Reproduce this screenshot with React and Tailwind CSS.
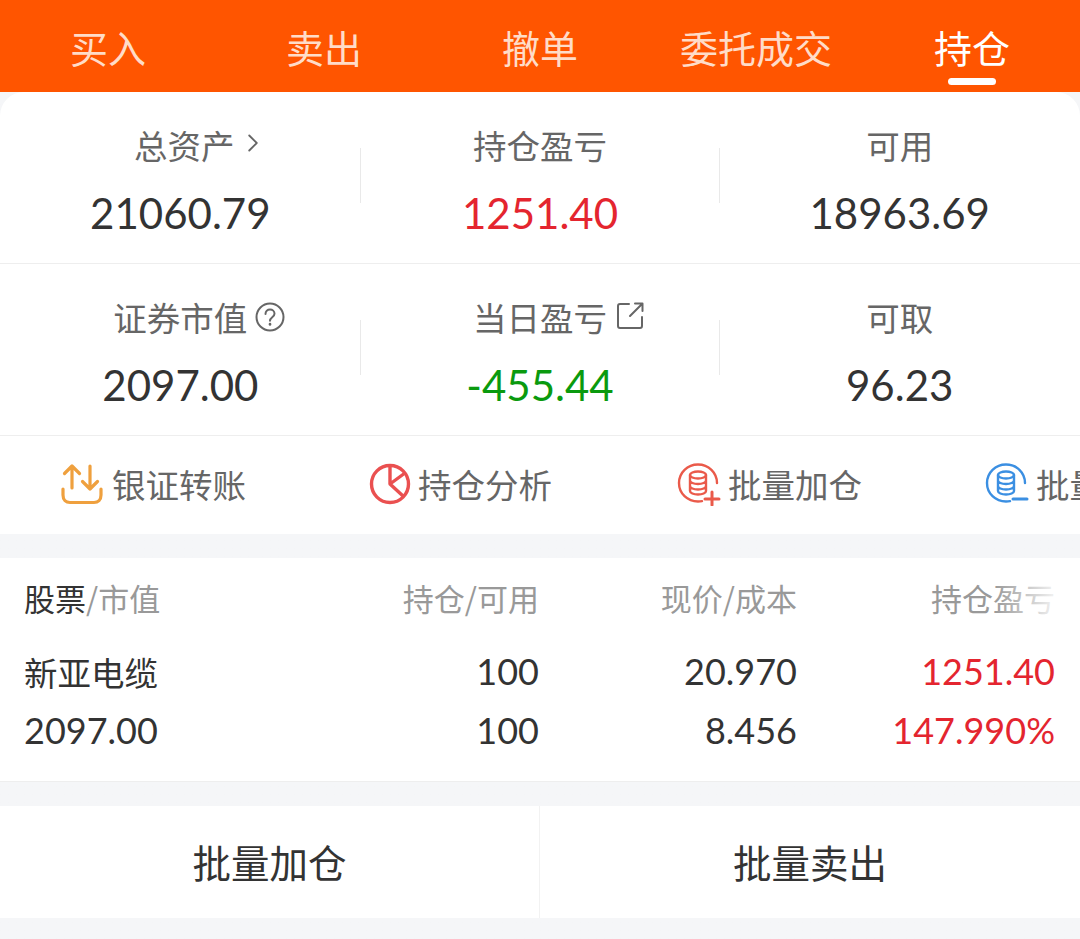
import { ChevronRight } from "lucide-react";

const CJK = "font-['Noto_Sans_CJK_SC','Noto_Sans',sans-serif]";
const NUM = "font-['Lato','Noto_Sans_CJK_SC',sans-serif]";

const TABS = ["买入", "卖出", "撤单", "委托成交", "持仓"];

function TransferIcon() {
  return (
    <svg width="44" height="44" viewBox="0 0 44 44" fill="none" stroke="#efa03e" strokeWidth="3.2" strokeLinecap="round" strokeLinejoin="round">
      <path d="M11 26V4M3.500 11.500 11 4l7.500 7.500" />
      <path d="M29 4v23M21.500 19.500 29 27l7.500-7.500" />
      <path d="M2 27v6c0 5 3 7.500 7 7.500h24c4 0 7-2.500 7-7.500v-6" />
    </svg>
  );
}

function PieIcon() {
  return (
    <svg width="42" height="42" viewBox="0 0 42 42" fill="none" stroke="#ea5050" strokeWidth="3.400" strokeLinejoin="round">
      <circle cx="21" cy="21" r="18.500" />
      <path d="M21 3v18l15-11M21 21l13 12" />
    </svg>
  );
}

function DbIcon({ color, plus }) {
  return (
    <svg width="44" height="44" viewBox="0 0 44 44" fill="none" stroke={color} strokeWidth="2.400" strokeLinecap="round">
      <path d="M40 21C40 10.500 31.500 2.500 21 2.500S2 10.500 2 21s8.500 18.500 19 18.500c1.500 0 3-.2 4-.4" />
      <ellipse cx="21" cy="13" rx="8" ry="3.500" />
      <path d="M13 13v16c0 2 3.600 3.500 8 3.500s8-1.500 8-3.500V13M13 18.500c0 2 3.600 3.500 8 3.500s8-1.500 8-3.500M13 24c0 2 3.600 3.500 8 3.500s8-1.500 8-3.500" />
      <path d="M28 37h14" strokeWidth="3" />
      {plus && <path d="M35 30v13" strokeWidth="3" />}
    </svg>
  );
}

function Stat({ label, value, color, after, shift }) {
  return (
    <div className="flex-1 flex flex-col items-center">
      <div className={`relative h-[46px] leading-[46px] text-[33.500px] text-[#666666] ${CJK} ${shift || ""}`}>
        {label}
        {after}
      </div>
      <div className={`mt-[20px] h-[50px] leading-[50px] text-[42px] ${NUM} ${color}`}>{value}</div>
    </div>
  );
}

function Divider() {
  return <div className="w-px h-[55px] mt-[26px] bg-[#e9e9e9] -mx-px shrink-0" />;
}

function StatRow({ children }) {
  return <div className="flex pt-[30px] h-[172px] border-b border-[#eeeeee]">{children}</div>;
}

function Shortcut({ icon, label }) {
  return (
    <div className="w-[308px] shrink-0 flex items-center gap-[7px]">
      {icon}
      <span className={`text-[33.500px] text-[#666666] ${CJK}`}>{label}</span>
    </div>
  );
}

export default function App() {
  return (
    <div className="w-[1080px] h-[939px] overflow-hidden bg-[#f5f6f8] bg-gradient-to-b from-[#ff5500] from-[92px] to-[#f5f6f8] to-[92px]">
      <div className="h-[92px] grid grid-cols-5">
        {TABS.map((t, i) => (
          <div key={t} className="relative flex justify-center pt-[20px]">
            <span className={`text-[38px] leading-[54px] ${CJK} ${i === 4 ? "text-white" : "text-[#ffdcc8]"}`}>{t}</span>
            {i === 4 && <div className="absolute left-[84px] top-[78px] w-[48px] h-[7px] rounded-full bg-white" />}
          </div>
        ))}
      </div>

      <div className="bg-white rounded-t-[24px]">
        <StatRow>
          <Stat
            label="总资产"
            value="21060.79"
            color="text-[#333333]"
            shift="left-[4px]"
            after={<ChevronRight className="absolute left-full top-[6px] ml-[3px]" size={30} strokeWidth={1.500} color="#666666" />}
          />
          <Divider />
          <Stat label="持仓盈亏" value="1251.40" color="text-[#e4252f]" />
          <Divider />
          <Stat label="可用" value="18963.69" color="text-[#333333]" />
        </StatRow>
        <StatRow>
          <Stat
            label="证券市值"
            value="2097.00"
            color="text-[#333333]"
            after={
              <svg className="absolute left-full top-[8px] ml-[8px]" width="30" height="30" viewBox="0 0 30 30" fill="none" stroke="#666666" strokeWidth="2" strokeLinecap="round">
                <circle cx="15" cy="15" r="13.500" />
                <path d="M10.500 12c0-2.800 2-4.500 4.500-4.500s4.500 1.700 4.500 4.200c0 3.500-4.500 3.500-4.500 7" />
                <path d="M15 22v.5" strokeWidth="2.600" />
              </svg>
            }
          />
          <Divider />
          <Stat
            label="当日盈亏"
            value="-455.44"
            color="text-[#0a9a0e]"
            after={
              <svg className="absolute left-full top-[8px] ml-[10px]" width="27" height="27" viewBox="0 0 27 27" fill="none" stroke="#666666" strokeWidth="2" strokeLinecap="round" strokeLinejoin="round">
                <path d="M12 2H3a2 2 0 0 0-2 2v20a2 2 0 0 0 2 2h20a2 2 0 0 0 2-2V15" />
                <path d="M13 14 25 2M18 1.500h7.500V9" />
              </svg>
            }
          />
          <Divider />
          <Stat label="可取" value="96.23" color="text-[#333333]" />
        </StatRow>

        <div className="flex h-[98px] pl-[61px] pb-[2px] overflow-hidden">
          <Shortcut icon={<TransferIcon />} label="银证转账" />
          <Shortcut icon={<PieIcon />} label="持仓分析" />
          <Shortcut icon={<DbIcon color="#ea5a4a" plus />} label="批量加仓" />
          <Shortcut icon={<DbIcon color="#3b8fe2" />} label="批量卖出" />
        </div>
      </div>

      <div className="mt-[24px] bg-white h-[224px] border-b border-[#eeeeee]">
        <div className="relative grid grid-cols-[257px_258px_258px_258px] pl-[24px] pt-[16px] h-[84px] text-[31px] leading-[48px] text-[#999999]">
          <div className={CJK}>
            <span className="text-[#333333]">股票</span>/市值
          </div>
          <div className={`text-right ${CJK}`}>持仓/可用</div>
          <div className={`text-right ${CJK}`}>现价/成本</div>
          <div className={`text-right ${CJK}`}>持仓盈亏</div>
          <div className="absolute right-[16px] top-0 h-full w-[70px] bg-gradient-to-r from-white/0 to-white" />
        </div>
        <div className="grid grid-cols-[257px_258px_258px_258px] pl-[24px] text-[36px] leading-[59px] text-[#333333]">
          <div className={`text-[33.500px] ${CJK}`}>新亚电缆</div>
          <div className={`text-right ${NUM}`}>100</div>
          <div className={`text-right ${NUM}`}>20.970</div>
          <div className={`text-right text-[#e4252f] ${NUM}`}>1251.40</div>
          <div className={NUM}>2097.00</div>
          <div className={`text-right ${NUM}`}>100</div>
          <div className={`text-right ${NUM}`}>8.456</div>
          <div className={`text-right text-[#e4252f] ${NUM}`}>147.990%</div>
        </div>
      </div>

      <div className="mt-[24px] bg-white h-[112px] grid grid-cols-2">
        <div className={`flex items-center justify-center border-r border-[#f2f2f2] text-[38.500px] text-[#333333] ${CJK}`}>批量加仓</div>
        <div className={`flex items-center justify-center text-[38.500px] text-[#333333] ${CJK}`}>批量卖出</div>
      </div>
    </div>
  );
}
